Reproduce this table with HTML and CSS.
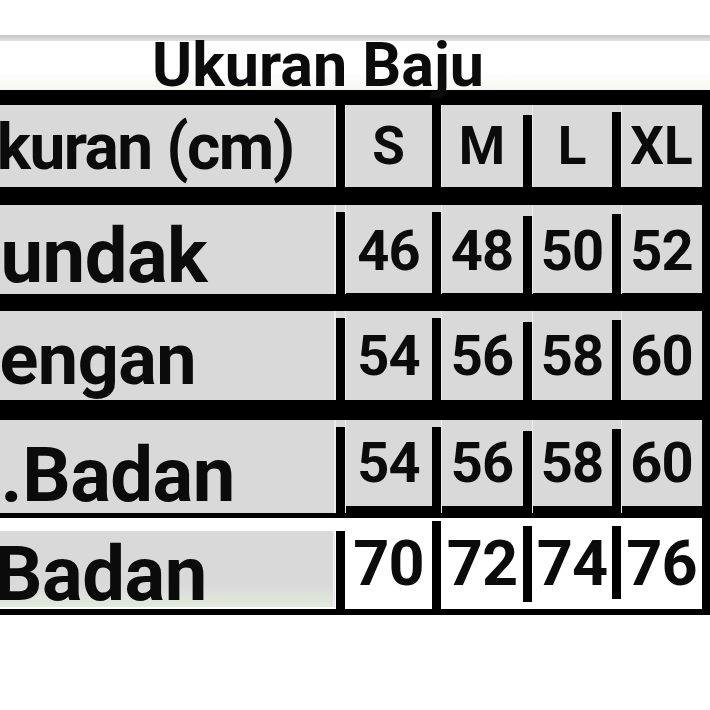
FILE: index.html
```html
<!DOCTYPE html>
<html lang="id">
<head>
<meta charset="utf-8">
<title>Ukuran Baju</title>
<link rel="stylesheet" href="styles.css">
</head>
<body>
<div class="page">
  <div class="topband"></div>
  <h1 class="title">Ukuran Baju</h1>
  <div class="table">
    <div class="row head">
      <div class="label"><span class="lt lt-head">Ukuran (cm)</span></div>
      <div class="bar"></div>
      <div class="cell">S</div>
      <div class="bar"></div>
      <div class="cell">M</div>
      <div class="bar b-low"></div>
      <div class="cell">L</div>
      <div class="bar b-mid"></div>
      <div class="cell">XL</div>
    </div>
    <div class="row data r1">
      <div class="label"><span class="lt lt-p">Pundak</span></div>
      <div class="bar"></div>
      <div class="cell">46</div>
      <div class="bar"></div>
      <div class="cell">48</div>
      <div class="bar b-low"></div>
      <div class="cell">50</div>
      <div class="bar b-mid"></div>
      <div class="cell">52</div>
    </div>
    <div class="row data r2">
      <div class="label"><span class="lt lt-l">Lengan</span></div>
      <div class="bar"></div>
      <div class="cell">54</div>
      <div class="bar"></div>
      <div class="cell">56</div>
      <div class="bar b-low"></div>
      <div class="cell">58</div>
      <div class="bar b-mid"></div>
      <div class="cell">60</div>
    </div>
    <div class="row data r3">
      <div class="label"><span class="lt lt-lb">L.Badan</span></div>
      <div class="bar"></div>
      <div class="cell">54</div>
      <div class="bar"></div>
      <div class="cell">56</div>
      <div class="bar b-low"></div>
      <div class="cell">58</div>
      <div class="bar b-mid"></div>
      <div class="cell">60</div>
    </div>
    <div class="row data r4">
      <div class="label"><span class="lt lt-pb">P.Badan</span></div>
      <div class="bar b4-1"></div>
      <div class="cell">70</div>
      <div class="bar b4-2"></div>
      <div class="cell">72</div>
      <div class="bar b4-3"></div>
      <div class="cell">74</div>
      <div class="bar b4-4"></div>
      <div class="cell">76</div>
    </div>
  </div>
</div>
</body>
</html>
```

FILE: styles.css
```css
html, body {
  margin: 0;
  padding: 0;
  background: #ffffff;
}

body {
  font-family: Roboto, "Liberation Sans", Arial, sans-serif;
  color: #0b0b0b;
  width: 710px;
  height: 710px;
  overflow: hidden;
}

.page {
  width: 710px;
  padding-top: 35px;
}

.topband {
  height: 6px;
  background: linear-gradient(#c4c4c4, #e2e2e2);
}

.title {
  margin: 0;
  padding-left: 152px;
  font-size: 61px;
  font-weight: 700;
  line-height: 49px;
  height: 49px;
  letter-spacing: 0;
  background: linear-gradient(#ffffff 60%, #f4f8f1);
}

.table {
  width: 702px;
  background: #000;
  padding: 15px 8px 6px 0;
  display: flex;
  flex-direction: column;
  gap: 18px;
}

.row {
  display: grid;
  grid-template-columns: 336px 9px 87px 9px 82px 9px 80px 9px 81px;
  background: #d9d9d9;
}

.row.head { height: 82px; }
.row.r1 { height: 88px; }
.row.r2 { height: 89px; }
.row.r3 { height: 86px; margin-top: 2px; }
.row.r4 {
  height: 91px;
  margin-top: -6px;
  background: #fff;
}

.label {
  background: #d9d9d9;
  font-weight: 700;
  line-height: 1;
  white-space: nowrap;
  box-shadow: inset -2px 0 0 #ececec;
}

.lt { display: inline-block; }

.lt-head { font-size: 64px; padding-top: 11px; margin-left: -44px; letter-spacing: -1.5px; }
.lt-p    { font-size: 76px; padding-top: 13px; margin-left: -48px; letter-spacing: -0.5px; }
.lt-l    { font-size: 72px; padding-top: 13px; margin-left: -39px; letter-spacing: -0.5px; }
.lt-lb   { font-size: 76px; padding-top: 17px; margin-left: -40px; letter-spacing: -0.5px; }
.lt-pb   { font-size: 76px; padding-top: 5px;  margin-left: -62px; letter-spacing: -0.5px; }

.r4 .label {
  margin-top: 13px;
  margin-right: 1px;
  height: 76px;
  background: linear-gradient(#d9d9d9 70%, #e1ebdc);
}

.bar {
  background: #000;
}

.data .bar { margin-top: 7px; }
.head .b-low { margin-top: 10px; }
.head .b-mid { margin-top: 7px; }
.data .b-low { margin-top: 11px; }
.data .b-mid { margin-top: 9px; }

.r4 .bar { background: #000; }
.r4 .b4-1 { margin-top: 13px; }
.r4 .b4-2 { margin-top: 3px; }
.r4 .b4-3 { margin-top: 8px; margin-bottom: 7px; }
.r4 .b4-4 { margin-top: 8px; margin-bottom: 10px; }

.cell {
  font-weight: 700;
  text-align: center;
  line-height: 1;
  white-space: nowrap;
  box-shadow: inset 1px 0 0 #ededed;
}

.head .cell { font-size: 53px; padding-top: 15px; }
.r1 .cell { font-size: 56px; padding-top: 18px; letter-spacing: -1px; }
.r2 .cell { font-size: 56px; padding-top: 17px; letter-spacing: -1px; }
.r3 .cell { font-size: 56px; padding-top: 15px; letter-spacing: -1px; }
.r4 .cell {
  font-size: 63px;
  padding-top: 14px;
  letter-spacing: -1px;
  background: #fff;
  box-shadow: none;
}
```
